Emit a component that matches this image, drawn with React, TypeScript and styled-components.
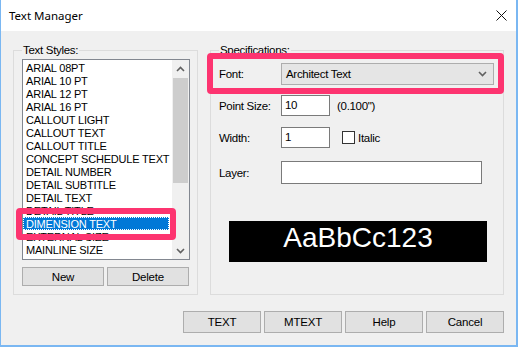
import React from 'react'
import styled, { createGlobalStyle } from 'styled-components'

const GlobalStyle = createGlobalStyle`
  html, body {
    margin: 0;
    padding: 0;
    background: #ffffff;
  }
  * {
    box-sizing: border-box;
  }
`

const STYLES = [
  'ARIAL 08PT',
  'ARIAL 10 PT',
  'ARIAL 12 PT',
  'ARIAL 16 PT',
  'CALLOUT LIGHT',
  'CALLOUT TEXT',
  'CALLOUT TITLE',
  'CONCEPT SCHEDULE TEXT',
  'DETAIL NUMBER',
  'DETAIL SUBTITLE',
  'DETAIL TEXT',
  'DETAIL TITLE',
  'DIMENSION TEXT',
  'EXTERNAL SIZE',
  'MAINLINE SIZE',
]

const SELECTED = 'DIMENSION TEXT'

const Chevron = ({ up }: { up?: boolean }) => (
  <svg width="9" height="6" viewBox="0 0 9 6">
    <path
      d={up ? 'M1 5 L4.5 1.5 L8 5' : 'M1 1 L4.5 4.5 L8 1'}
      fill="none"
      stroke="#606060"
      strokeWidth="1.6"
    />
  </svg>
)

export default function App() {
  return (
    <>
      <GlobalStyle />
      <Window>
        <TitleBar>
          <Title>Text Manager</Title>
          <svg width="11" height="11" viewBox="0 0 11 11">
            <path d="M0.5 0.5 L10.5 10.5 M10.5 0.5 L0.5 10.5" stroke="#111" strokeWidth="1" />
          </svg>
        </TitleBar>

        <Body>
          <Groups>
            <StylesGroup>
              <Legend>Text Styles:</Legend>
              <ListBox>
                <Items>
                  {STYLES.map((name) => (
                    <Item key={name} $selected={name === SELECTED}>
                      {name}
                    </Item>
                  ))}
                </Items>
                <ScrollBar>
                  <ScrollButton>
                    <Chevron up />
                  </ScrollButton>
                  <Thumb />
                  <ScrollButton>
                    <Chevron />
                  </ScrollButton>
                </ScrollBar>
                <Highlight $left={-7} $top={148} $width={160} $height={32} />
              </ListBox>
              <ListButtons>
                <SmallButton>New</SmallButton>
                <SmallButton>Delete</SmallButton>
              </ListButtons>
            </StylesGroup>

            <SpecGroup>
              <Legend>Specifications:</Legend>
              <Row $top={6}>
                <Label>Font:</Label>
                <Combo>
                  <span>Architect Text</span>
                  <Chevron />
                </Combo>
                <Highlight $left={-12} $top={-10} $width={297} $height={41} />
              </Row>
              <Row $top={10}>
                <Label>Point Size:</Label>
                <Input $width={49} $height={21}>10</Input>
                <Hint>(0.100")</Hint>
              </Row>
              <Row $top={11}>
                <Label>Width:</Label>
                <Input $width={49} $height={21}>1</Input>
                <CheckBox />
                <CheckLabel>Italic</CheckLabel>
              </Row>
              <Row $top={13}>
                <Label>Layer:</Label>
                <Input $width={201} $height={23} />
              </Row>
              <Preview>AaBbCc123</Preview>
            </SpecGroup>
          </Groups>

          <Footer>
            <DialogButton>TEXT</DialogButton>
            <DialogButton>MTEXT</DialogButton>
            <DialogButton>Help</DialogButton>
            <DialogButton>Cancel</DialogButton>
          </Footer>
        </Body>
      </Window>
    </>
  )
}

const Window = styled.div`
  width: 518px;
  height: 347px;
  display: flex;
  flex-direction: column;
  background: #f0f0f0;
  border: solid #7ab7f2;
  border-width: 0 2px 2px 1px;
  font-family: 'Liberation Sans', Arial, sans-serif;
  font-size: 11.5px;
  letter-spacing: -0.3px;
  color: #000;
`

const TitleBar = styled.div`
  height: 31px;
  flex: none;
  background: #ffffff;
  display: flex;
  align-items: center;
  justify-content: space-between;
  padding: 0 9px 1px 8px;
`

const Title = styled.span`
  font-family: 'Noto Sans', 'Open Sans', sans-serif;
  font-size: 11.5px;
  letter-spacing: 0;
  color: #000;
`

const Body = styled.div`
  flex: 1;
  display: flex;
  flex-direction: column;
  padding: 12px 12px 0 12px;
`

const Groups = styled.div`
  display: flex;
  gap: 12px;
`

const Group = styled.fieldset`
  margin: 0;
  min-width: 0;
  border: 1px solid #dcdcdc;
  padding: 0 7px 8px 8px;
  display: flex;
  flex-direction: column;
`

const StylesGroup = styled(Group)`
  width: 185px;
  height: 252px;
  padding-top: 2px;
`

const SpecGroup = styled(Group)`
  width: 294px;
  height: 252px;
`

const Legend = styled.legend`
  padding: 0 1px;
  line-height: 14px;
  height: 14px;
  color: #000;
`

const ListBox = styled.div`
  position: relative;
  width: 168px;
  height: 201px;
  border: 1px solid #828790;
  background: #ffffff;
  display: flex;
`

const Items = styled.div`
  flex: 1;
  overflow: hidden;
  padding: 1px 3px 0 0;
  font-size: 11px;
  letter-spacing: -0.2px;
`

const Item = styled.div<{ $selected?: boolean }>`
  height: 13px;
  line-height: 15px;
  padding-left: 3px;
  white-space: nowrap;
  background: ${(p) => (p.$selected ? '#0078d7' : 'transparent')};
  color: ${(p) => (p.$selected ? '#ffffff' : '#000000')};
  outline: ${(p) => (p.$selected ? '1px dotted #ffffff' : 'none')};
  outline-offset: -1px;
`

const ScrollBar = styled.div`
  width: 17px;
  background: #f0f0f0;
  display: flex;
  flex-direction: column;
`

const ScrollButton = styled.div`
  height: 17px;
  display: flex;
  align-items: center;
  justify-content: center;
`

const Thumb = styled.div`
  height: 105px;
  margin: 1px 1px auto;
  background: #cdcdcd;
  flex: none;
`

const ListButtons = styled.div`
  display: flex;
  gap: 3px;
  margin-top: 7px;
`

const ButtonBase = styled.div`
  display: flex;
  align-items: center;
  justify-content: center;
  background: #e1e1e1;
  border: 1px solid #adadad;
  letter-spacing: -0.2px;
`

const SmallButton = styled(ButtonBase)`
  width: 82px;
  height: 19px;
`

const DialogButton = styled(ButtonBase)`
  width: 78px;
  height: 22px;
`

const Row = styled.div<{ $top: number }>`
  position: relative;
  display: flex;
  align-items: center;
  margin-top: ${(p) => p.$top}px;
`

const Label = styled.span`
  width: 62px;
  flex: none;
`

const Combo = styled.div`
  width: 213px;
  height: 22px;
  background: #e5e5e5;
  border: 1px solid #adadad;
  display: flex;
  align-items: center;
  justify-content: space-between;
  padding: 0 6px 0 4px;
`

const Input = styled.div<{ $width: number; $height: number }>`
  width: ${(p) => p.$width}px;
  height: ${(p) => p.$height}px;
  background: #ffffff;
  border: 1px solid #7a7a7a;
  padding: 2px 0 0 3px;
  line-height: 14px;
`

const Hint = styled.span`
  margin-left: 7px;
`

const CheckBox = styled.div`
  width: 13px;
  height: 13px;
  margin-left: 12px;
  background: #ffffff;
  border: 1px solid #333333;
`

const CheckLabel = styled.span`
  margin-left: 3px;
`

const Preview = styled.div`
  width: 258px;
  height: 41px;
  margin: 37px 0 0 10px;
  padding-bottom: 8px;
  background: #000000;
  color: #ffffff;
  font-size: 28px;
  letter-spacing: 0;
  line-height: 33px;
  text-align: center;
`

const Highlight = styled.div<{ $left: number; $top: number; $width: number; $height: number }>`
  position: absolute;
  left: ${(p) => p.$left}px;
  top: ${(p) => p.$top}px;
  width: ${(p) => p.$width}px;
  height: ${(p) => p.$height}px;
  border: 6px solid #fd3470;
  border-radius: 4px;
  pointer-events: none;
`

const Footer = styled.div`
  display: flex;
  justify-content: flex-end;
  gap: 3px;
  margin-top: 16px;
`
